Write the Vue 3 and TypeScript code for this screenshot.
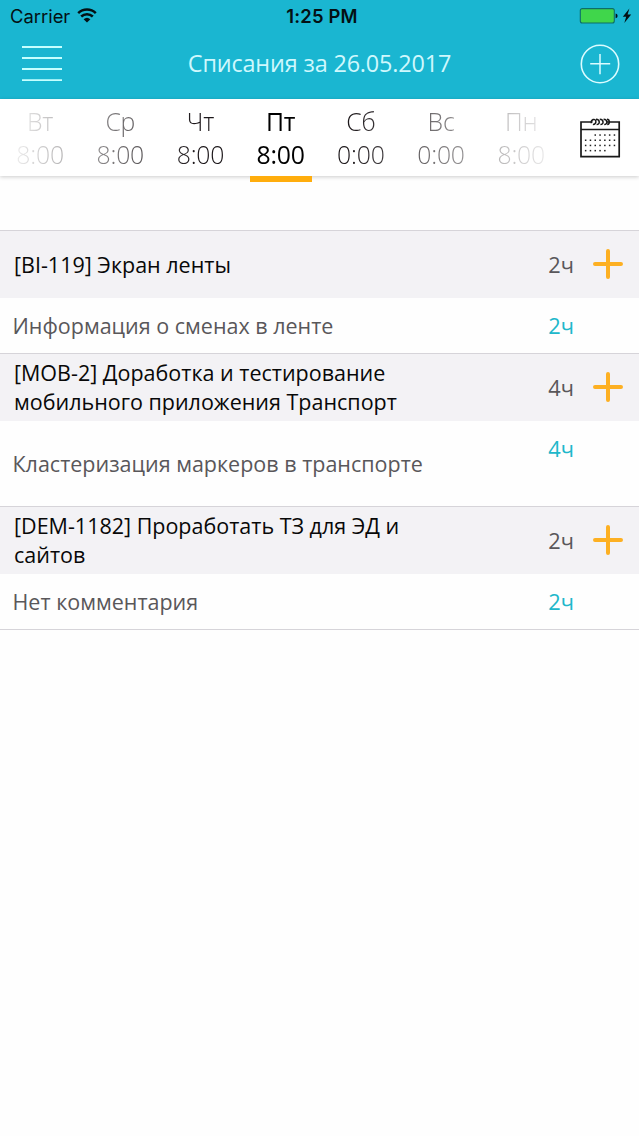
<script setup lang="ts">
interface Day { name: string; hours: string; active?: boolean }
interface Task { lines: string[]; total: string; comment: string; spent: string; tall?: boolean }

const days: Day[] = [
  { name: 'Вт', hours: '8:00' },
  { name: 'Ср', hours: '8:00' },
  { name: 'Чт', hours: '8:00' },
  { name: 'Пт', hours: '8:00', active: true },
  { name: 'Сб', hours: '0:00' },
  { name: 'Вс', hours: '0:00' },
  { name: 'Пн', hours: '8:00' },
]

const tasks: Task[] = [
  { lines: ['[BI-119] Экран ленты'], total: '2ч', comment: 'Информация о сменах в ленте', spent: '2ч' },
  {
    lines: ['[MOB-2] Доработка и тестирование', 'мобильного приложения Транспорт'],
    total: '4ч', comment: 'Кластеризация маркеров в транспорте', spent: '4ч', tall: true,
  },
  { lines: ['[DEM-1182] Проработать ТЗ для ЭД и', 'сайтов'], total: '2ч', comment: 'Нет комментария', spent: '2ч' },
]

// Day dots on the calendar icon: [x, y]
const dots: number[][] = []
for (let row = 0; row < 4; row++) {
  for (let col = 0; col < 7; col++) {
    if (row === 0 && col < 2) continue
    if (row === 3 && col > 4) continue
    dots.push([5.9 + col * 4.8, 17.3 + row * 5.2])
  }
}
</script>

<template>
  <div class="screen">
    <header class="header">
      <div class="status">
        <div class="carrier">
          <span>Carrier</span>
          <svg class="wifi" width="20" height="15" viewBox="0 0 20 15">
            <path d="M1.2 5.2a12.6 12.6 0 0 1 17.6 0M4.2 8.5a8.4 8.4 0 0 1 11.6 0" fill="none" stroke="#041014" stroke-width="2.5" />
            <path d="M6.6 11.3a5 5 0 0 1 6.8 0L10 14.6z" fill="#041014" />
          </svg>
        </div>
        <span class="clock">1:25 PM</span>
        <div class="power">
          <svg width="54" height="18" viewBox="0 0 54 18">
            <rect x="1.3" y="1.6" width="34" height="14.4" rx="2" fill="#40d64b" stroke="#0d6f67" stroke-width="1.1" />
            <path d="M36.6 6.5q2 .4 2 2.4t-2 2.4z" fill="#041014" />
            <path d="M50.4 1.6L43.8 9.8h3.4l-1.9 6.3 6.9-8.6h-3.6z" fill="#041014" />
          </svg>
        </div>
      </div>
      <div class="nav">
        <svg class="menu" width="40" height="38" viewBox="0 0 40 38">
          <path d="M0 2h40M0 13h40M0 24h40M0 35.2h40" stroke="#c5ffff" stroke-width="1.8" />
        </svg>
        <h1 class="title">Списания за 26.05.2017</h1>
        <svg class="add" width="40" height="40" viewBox="0 0 40 40">
          <circle cx="20" cy="20" r="18.7" fill="none" stroke="#dcfcff" stroke-width="1.6" />
          <path d="M10.2 19.8h20M20 10v20.2" stroke="#dcfcff" stroke-width="1.5" />
        </svg>
      </div>
    </header>

    <section class="week">
      <div class="days">
        <div v-for="(day, i) in days" :key="i" class="day" :class="{ active: day.active }">
          <span>{{ day.name }}</span>
          <span>{{ day.hours }}</span>
        </div>
      </div>
      <svg class="calendar" width="42" height="42" viewBox="0 0 42 42">
        <g fill="none" stroke="#191919">
          <path d="M13.5 5H2v34.6h38.2V5H28" stroke-width="1.7" />
          <path d="M2 12.4h38.2" stroke-width="1.5" />
          <path d="M12.2 6.2C12 2.2 16 1.2 16.8 3.9c.5 2-1 3.8-2.9 3.7M17 2.3c4.3.1 4.2 5.2.6 5.3M20.8 2.3c4.3.1 4.2 5.2.6 5.3M24.6 2.3c4.3.1 4.2 5.2.6 5.3M28 2.3c2.8.1 3.2 4.8.2 5.3" stroke-width="1.5" />
        </g>
        <rect v-for="(d, i) in dots" :key="i" :x="d[0]" :y="d[1]" width="1.5" height="1.5" fill="#222" />
      </svg>
    </section>

    <main class="tasks">
      <article v-for="(task, i) in tasks" :key="i" class="task">
        <div class="head">
          <div class="name">
            <div v-for="line in task.lines" :key="line">{{ line }}</div>
          </div>
          <span class="hours">{{ task.total }}</span>
          <svg class="plus" width="30" height="30" viewBox="0 0 30 30">
            <path d="M2 15h26M15 2v26" stroke="#fdb022" stroke-width="4" stroke-linecap="round" />
          </svg>
        </div>
        <div class="entry" :class="{ tall: task.tall }">
          <span class="comment">{{ task.comment }}</span>
          <span class="hours spent">{{ task.spent }}</span>
        </div>
      </article>
    </main>
  </div>
</template>

<style>
body { background: #fefefe; }
</style>

<style scoped>
.screen {
  width: 639px;
  height: 1136px;
  overflow: hidden;
  background: #fefefe;
  font-family: "Open Sans", "Noto Sans", sans-serif;
}
.header {
  height: 98.6px;
  background: #1ab6d1;
  display: flex;
  flex-direction: column;
}
.status {
  height: 32px;
  padding: 0 6px 0 10px;
  display: grid;
  grid-template-columns: 1fr auto 1fr;
  align-items: center;
  font: 400 18.4px/32px Inter, Roboto, sans-serif;
  color: #041014;
}
.carrier { display: flex; align-items: center; gap: 7px; }
.wifi { margin-top: -2px; }
.clock { font-weight: 600; letter-spacing: 0.2px; padding-left: 1px; }
.power { display: flex; justify-content: flex-end; }
.nav {
  height: 66px;
  padding: 0 19px 0 22px;
  display: flex;
  align-items: center;
  justify-content: space-between;
}
.menu { margin-top: -2px; }
.add { margin-top: -3px; }
.title {
  margin: -5px 3px 0 0;
  font-size: 23.4px;
  line-height: 32px;
  font-weight: 400;
  letter-spacing: -0.15px;
  color: #cff8fd;
}
.week {
  height: 77.4px;
  display: flex;
  box-shadow: 0 1px 4px rgba(0, 0, 0, 0.2);
  background: #fff;
}
.days {
  display: flex;
  width: 562px;
  height: 84px;
  flex: none;
  mask-image: linear-gradient(90deg, transparent 0, #000 195px, #000 350px, transparent 566px);
}
.day {
  width: 80.2px;
  flex: none;
  padding-top: 6px;
  box-sizing: border-box;
  display: flex;
  flex-direction: column;
  align-items: center;
  font-size: 24.8px;
  line-height: 33px;
  font-weight: 300;
  letter-spacing: -0.2px;
  color: #1c171a;
}
.day.active { font-weight: 400; color: #000; }
.day.active::after {
  content: "";
  width: 62px;
  height: 6px;
  margin-top: 5.4px;
  background: #ffad0d;
}
.calendar { margin: 18px 0 0 17px; }
.tasks {
  margin-top: 54px;
  border-bottom: 1px solid #d6d4d9;
}
.head {
  height: 68px;
  box-sizing: border-box;
  border-top: 1px solid #d6d4d9;
  background: #f3f2f5;
  display: flex;
  align-items: center;
  padding: 0 16px 0 14px;
}
.name {
  flex: 1;
  font-size: 21.5px;
  line-height: 29.5px;
  color: #080808;
  white-space: nowrap;
}
.hours {
  width: 26px;
  margin-right: 19px;
  text-align: right;
  font-size: 21.8px;
  line-height: 30px;
  color: #59575a;
}
.head .hours { padding-top: 1px; }
.entry {
  height: 55px;
  display: flex;
  padding: 13px 46px 0 12.5px;
  box-sizing: border-box;
  color: #59575a;
}
.comment {
  flex: 1;
  font-size: 21.5px;
  line-height: 30px;
  white-space: nowrap;
}
.spent { color: #20b7ca; }
.tall { height: 85px; }
.tall .comment { padding-top: 15px; }
</style>
